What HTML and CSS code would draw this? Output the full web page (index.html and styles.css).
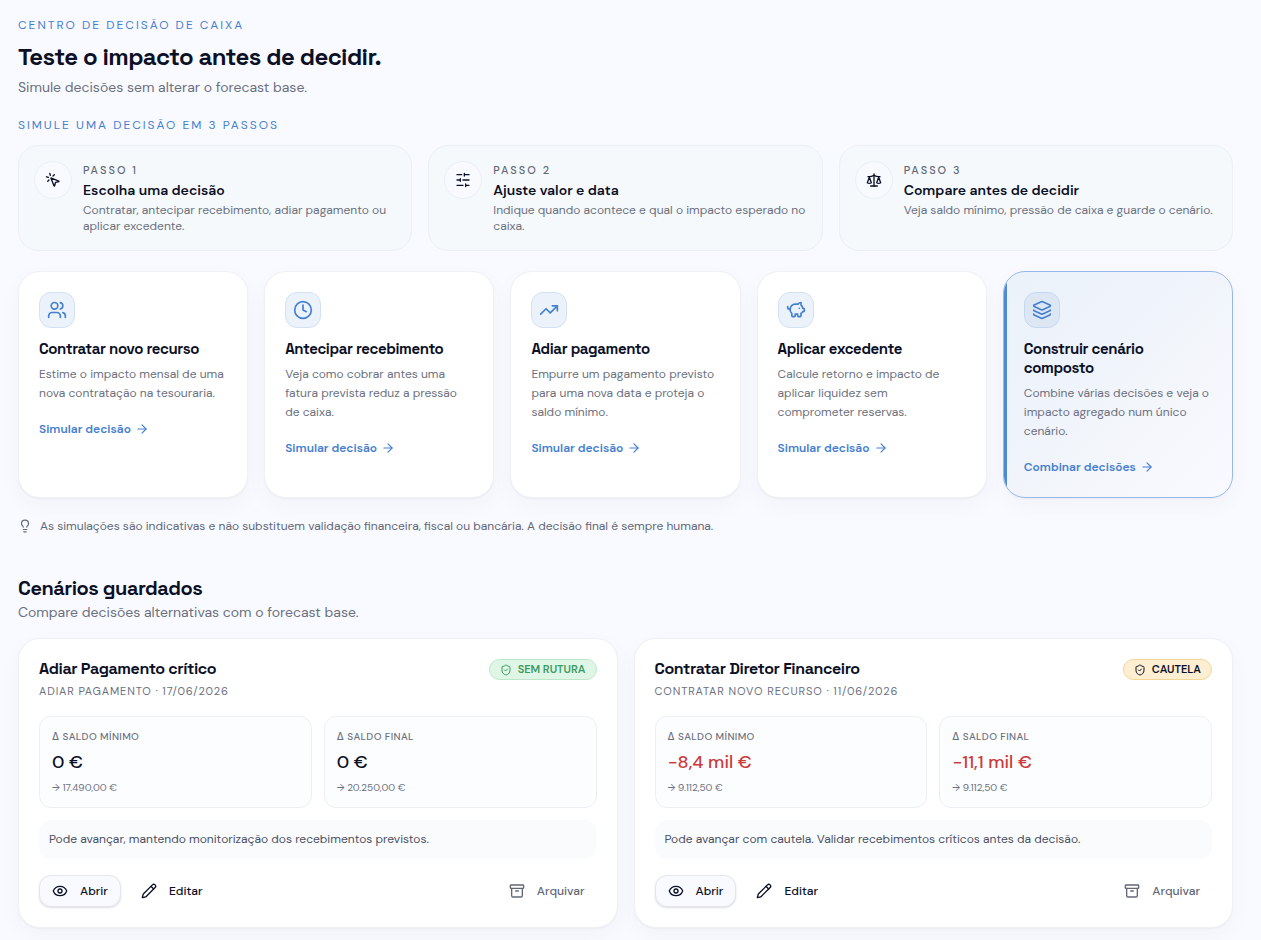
FILE: index.html
```html
<!DOCTYPE html>
<html lang="pt">
<head>
    <meta charset="UTF-8">
    <meta name="viewport" content="width=device-width, initial-scale=1.0">
    <title>Centro de decisão de caixa</title>
    <link rel="stylesheet" href="styles.css">
</head>
<body>
    <main class="page">
        <header class="page-header">
            <p class="eyebrow">Centro de decisão de caixa</p>
            <h1>Teste o impacto antes de decidir.</h1>
            <p class="lead">Simule decisões sem alterar o forecast base.</p>
        </header>

        <p class="eyebrow">Simule uma decisão em 3 passos</p>
        <ol class="steps">
            <li class="step">
                <span class="step-icon">
                    <svg class="icon" viewBox="0 0 24 24"><path d="M14 4.1 12 6"/><path d="m5.1 8-2.9-.8"/><path d="m6 12-1.9 2"/><path d="M7.2 2.2 8 5.1"/><path d="M9.037 9.69a.498.498 0 0 1 .653-.653l11 4.5a.5.5 0 0 1-.074.949l-4.349 1.041a1 1 0 0 0-.74.739l-1.04 4.35a.5.5 0 0 1-.95.074z"/></svg>
                </span>
                <div class="step-text">
                    <p class="step-number">Passo 1</p>
                    <h2>Escolha uma decisão</h2>
                    <p class="step-desc">Contratar, antecipar recebimento, adiar pagamento ou aplicar excedente.</p>
                </div>
            </li>
            <li class="step">
                <span class="step-icon">
                    <svg class="icon" viewBox="0 0 24 24"><path d="M21 4h-7M10 4H3M21 12h-9M8 12H3M21 20h-5M12 20H3M14 2v4M8 10v4M16 18v4"/></svg>
                </span>
                <div class="step-text">
                    <p class="step-number">Passo 2</p>
                    <h2>Ajuste valor e data</h2>
                    <p class="step-desc">Indique quando acontece e qual o impacto esperado no caixa.</p>
                </div>
            </li>
            <li class="step">
                <span class="step-icon">
                    <svg class="icon" viewBox="0 0 24 24"><path d="m16 16 3-8 3 8c-.87.65-1.92 1-3 1s-2.13-.35-3-1Z"/><path d="m2 16 3-8 3 8c-.87.65-1.92 1-3 1s-2.13-.35-3-1Z"/><path d="M7 21h10"/><path d="M12 3v18"/><path d="M3 7h2c2 0 5-1 7-2 2 1 5 2 7 2h2"/></svg>
                </span>
                <div class="step-text">
                    <p class="step-number">Passo 3</p>
                    <h2>Compare antes de decidir</h2>
                    <p class="step-desc">Veja saldo mínimo, pressão de caixa e guarde o cenário.</p>
                </div>
            </li>
        </ol>

        <section class="decisions">
            <article class="card decision">
                <span class="decision-icon">
                    <svg class="icon" viewBox="0 0 24 24"><path d="M16 21v-2a4 4 0 0 0-4-4H6a4 4 0 0 0-4 4v2"/><circle cx="9" cy="7" r="4"/><path d="M22 21v-2a4 4 0 0 0-3-3.87"/><path d="M16 3.13a4 4 0 0 1 0 7.75"/></svg>
                </span>
                <h3>Contratar novo recurso</h3>
                <p>Estime o impacto mensal de uma nova contratação na tesouraria.</p>
                <a href="#">Simular decisão <svg class="icon" viewBox="0 0 24 24"><path d="M5 12h14"/><path d="m12 5 7 7-7 7"/></svg></a>
            </article>
            <article class="card decision">
                <span class="decision-icon">
                    <svg class="icon" viewBox="0 0 24 24"><circle cx="12" cy="12" r="10"/><path d="M12 6v6l4 2"/></svg>
                </span>
                <h3>Antecipar recebimento</h3>
                <p>Veja como cobrar antes uma fatura prevista reduz a pressão de caixa.</p>
                <a href="#">Simular decisão <svg class="icon" viewBox="0 0 24 24"><path d="M5 12h14"/><path d="m12 5 7 7-7 7"/></svg></a>
            </article>
            <article class="card decision">
                <span class="decision-icon">
                    <svg class="icon" viewBox="0 0 24 24"><path d="m22 7-8.5 8.5-5-5L2 17"/><path d="M16 7h6v6"/></svg>
                </span>
                <h3>Adiar pagamento</h3>
                <p>Empurre um pagamento previsto para uma nova data e proteja o saldo mínimo.</p>
                <a href="#">Simular decisão <svg class="icon" viewBox="0 0 24 24"><path d="M5 12h14"/><path d="m12 5 7 7-7 7"/></svg></a>
            </article>
            <article class="card decision">
                <span class="decision-icon">
                    <svg class="icon" viewBox="0 0 24 24"><path d="M11 17h3v2a1 1 0 0 0 1 1h2a1 1 0 0 0 1-1v-3a3.16 3.16 0 0 0 2-2h1a1 1 0 0 0 1-1v-2a1 1 0 0 0-1-1h-1a5 5 0 0 0-2-4V3a4 4 0 0 0-3.2 1.6l-.3.4H11a6 6 0 0 0-6 6v1a5 5 0 0 0 2 4v3a1 1 0 0 0 1 1h2a1 1 0 0 0 1-1z"/><path d="M16 10h.01"/><path d="M2 8v1a2 2 0 0 0 2 2h1"/></svg>
                </span>
                <h3>Aplicar excedente</h3>
                <p>Calcule retorno e impacto de aplicar liquidez sem comprometer reservas.</p>
                <a href="#">Simular decisão <svg class="icon" viewBox="0 0 24 24"><path d="M5 12h14"/><path d="m12 5 7 7-7 7"/></svg></a>
            </article>
            <article class="card decision decision-featured">
                <span class="decision-icon">
                    <svg class="icon" viewBox="0 0 24 24"><path d="M12.83 2.18a2 2 0 0 0-1.66 0L2.6 6.08a1 1 0 0 0 0 1.83l8.58 3.91a2 2 0 0 0 1.66 0l8.58-3.9a1 1 0 0 0 0-1.83z"/><path d="M2 12a1 1 0 0 0 .58.91l8.6 3.91a2 2 0 0 0 1.65 0l8.58-3.9A1 1 0 0 0 22 12"/><path d="M2 17a1 1 0 0 0 .58.91l8.6 3.91a2 2 0 0 0 1.65 0l8.58-3.9A1 1 0 0 0 22 17"/></svg>
                </span>
                <h3>Construir cenário composto</h3>
                <p>Combine várias decisões e veja o impacto agregado num único cenário.</p>
                <a href="#">Combinar decisões <svg class="icon" viewBox="0 0 24 24"><path d="M5 12h14"/><path d="m12 5 7 7-7 7"/></svg></a>
            </article>
        </section>

        <p class="note">
            <svg class="icon" viewBox="0 0 24 24"><path d="M15 14c.2-1 .7-1.7 1.5-2.5 1-.9 1.5-2.2 1.5-3.5A6 6 0 0 0 6 8c0 1 .2 2.2 1.5 3.5.7.7 1.3 1.5 1.5 2.5"/><path d="M9 18h6"/><path d="M10 22h4"/></svg>
            As simulações são indicativas e não substituem validação financeira, fiscal ou bancária. A decisão final é sempre humana.
        </p>

        <section class="saved">
            <h2>Cenários guardados</h2>
            <p class="lead">Compare decisões alternativas com o forecast base.</p>

            <div class="scenarios">
                <article class="card scenario">
                    <div class="scenario-head">
                        <div>
                            <h3>Adiar Pagamento crítico</h3>
                            <p class="scenario-meta">Adiar pagamento · 17/06/2026</p>
                        </div>
                        <span class="badge badge-ok">
                            <svg class="icon" viewBox="0 0 24 24"><path d="M20 13c0 5-3.5 7.5-7.66 8.95a1 1 0 0 1-.67-.01C7.5 20.5 4 18 4 13V6a1 1 0 0 1 1-1c2 0 4.5-1.2 6.24-2.72a1.17 1.17 0 0 1 1.52 0C14.51 3.81 17 5 19 5a1 1 0 0 1 1 1z"/><path d="m9 12 2 2 4-4"/></svg>
                            Sem rutura
                        </span>
                    </div>
                    <dl class="metrics">
                        <div class="metric">
                            <dt>Δ Saldo mínimo</dt>
                            <dd class="metric-value">0 €</dd>
                            <dd class="metric-hint">→ 17.490,00 €</dd>
                        </div>
                        <div class="metric">
                            <dt>Δ Saldo final</dt>
                            <dd class="metric-value">0 €</dd>
                            <dd class="metric-hint">→ 20.250,00 €</dd>
                        </div>
                    </dl>
                    <p class="message">Pode avançar, mantendo monitorização dos recebimentos previstos.</p>
                    <div class="actions">
                        <button type="button" class="btn btn-outline"><svg class="icon" viewBox="0 0 24 24"><path d="M2.06 12.35a1 1 0 0 1 0-.7 10.75 10.75 0 0 1 19.88 0 1 1 0 0 1 0 .7 10.75 10.75 0 0 1-19.88 0"/><circle cx="12" cy="12" r="3"/></svg>Abrir</button>
                        <button type="button" class="btn"><svg class="icon" viewBox="0 0 24 24"><path d="M21.17 6.81a1 1 0 0 0-3.99-3.99L3.84 16.17a2 2 0 0 0-.5.83l-1.32 4.35a.5.5 0 0 0 .62.62l4.35-1.32a2 2 0 0 0 .83-.5z"/><path d="m15 5 4 4"/></svg>Editar</button>
                        <button type="button" class="btn btn-muted"><svg class="icon" viewBox="0 0 24 24"><rect width="20" height="5" x="2" y="3" rx="1"/><path d="M4 8v11a2 2 0 0 0 2 2h12a2 2 0 0 0 2-2V8"/><path d="M10 12h4"/></svg>Arquivar</button>
                    </div>
                </article>

                <article class="card scenario">
                    <div class="scenario-head">
                        <div>
                            <h3>Contratar Diretor Financeiro</h3>
                            <p class="scenario-meta">Contratar novo recurso · 11/06/2026</p>
                        </div>
                        <span class="badge badge-warn">
                            <svg class="icon" viewBox="0 0 24 24"><path d="M20 13c0 5-3.5 7.5-7.66 8.95a1 1 0 0 1-.67-.01C7.5 20.5 4 18 4 13V6a1 1 0 0 1 1-1c2 0 4.5-1.2 6.24-2.72a1.17 1.17 0 0 1 1.52 0C14.51 3.81 17 5 19 5a1 1 0 0 1 1 1z"/><path d="m9 12 2 2 4-4"/></svg>
                            Cautela
                        </span>
                    </div>
                    <dl class="metrics">
                        <div class="metric">
                            <dt>Δ Saldo mínimo</dt>
                            <dd class="metric-value negative">−8,4 mil €</dd>
                            <dd class="metric-hint">→ 9.112,50 €</dd>
                        </div>
                        <div class="metric">
                            <dt>Δ Saldo final</dt>
                            <dd class="metric-value negative">−11,1 mil €</dd>
                            <dd class="metric-hint">→ 9.112,50 €</dd>
                        </div>
                    </dl>
                    <p class="message">Pode avançar com cautela. Validar recebimentos críticos antes da decisão.</p>
                    <div class="actions">
                        <button type="button" class="btn btn-outline"><svg class="icon" viewBox="0 0 24 24"><path d="M2.06 12.35a1 1 0 0 1 0-.7 10.75 10.75 0 0 1 19.88 0 1 1 0 0 1 0 .7 10.75 10.75 0 0 1-19.88 0"/><circle cx="12" cy="12" r="3"/></svg>Abrir</button>
                        <button type="button" class="btn"><svg class="icon" viewBox="0 0 24 24"><path d="M21.17 6.81a1 1 0 0 0-3.99-3.99L3.84 16.17a2 2 0 0 0-.5.83l-1.32 4.35a.5.5 0 0 0 .62.62l4.35-1.32a2 2 0 0 0 .83-.5z"/><path d="m15 5 4 4"/></svg>Editar</button>
                        <button type="button" class="btn btn-muted"><svg class="icon" viewBox="0 0 24 24"><rect width="20" height="5" x="2" y="3" rx="1"/><path d="M4 8v11a2 2 0 0 0 2 2h12a2 2 0 0 0 2-2V8"/><path d="M10 12h4"/></svg>Arquivar</button>
                    </div>
                </article>
            </div>
        </section>
    </main>
</body>
</html>
```

FILE: styles.css
```css
* {
    box-sizing: border-box;
}
body {
    font-family: "DM Sans", Inter, sans-serif;
    margin: 0;
    background-color: #f9faff;
    color: #0b1026;
}
h1, h2, h3, p, ol, dl, dd {
    margin: 0;
    padding: 0;
}
h1, h2, h3 {
    font-family: "Space Grotesk", "DM Sans", Inter, sans-serif;
    font-weight: 600;
    letter-spacing: -0.025em;
}
.page {
    padding: 17px 28px 12px 18px;
}
.icon {
    width: 16px;
    height: 16px;
    flex-shrink: 0;
    fill: none;
    stroke: currentColor;
    stroke-width: 2;
    stroke-linecap: round;
    stroke-linejoin: round;
}
.eyebrow {
    font-size: 12px;
    line-height: 16px;
    letter-spacing: 2px;
    text-transform: uppercase;
    color: #4580d0;
}
.page-header {
    margin-bottom: 20px;
}
.page-header h1 {
    margin: 8px 0 4px;
    font-size: 24px;
    line-height: 32px;
}
.lead {
    font-size: 14px;
    line-height: 20px;
    color: #6b7080;
}

/* Steps */
.steps {
    display: grid;
    grid-template-columns: repeat(3, 1fr);
    gap: 16px;
    margin-top: 12px;
    list-style: none;
}
.step {
    display: flex;
    gap: 11px;
    padding: 15px;
    background: #f5f9fc;
    border: 1px solid #eceff4;
    border-radius: 20px;
}
.step-icon {
    display: flex;
    align-items: center;
    justify-content: center;
    flex-shrink: 0;
    width: 38px;
    height: 38px;
    background: #f9faff;
    border: 1px solid #eceff4;
    border-radius: 50%;
}
.step-number {
    font-size: 11px;
    font-weight: 500;
    line-height: 18px;
    letter-spacing: 2px;
    text-transform: uppercase;
    color: #626878;
}
.step h2 {
    font-family: "DM Sans", Inter, sans-serif;
    font-size: 14px;
    line-height: 22px;
    letter-spacing: normal;
}
.step-desc {
    margin: 1px 0;
    font-size: 12px;
    line-height: 16px;
    color: #6b7080;
}

/* Decision cards */
.card {
    padding: 20px;
    background: #fff;
    border: 1px solid #eff1f5;
    border-radius: 22px;
    box-shadow: 0 1px 2px rgba(15, 23, 42, 0.04), 0 8px 24px rgba(15, 23, 42, 0.03);
}
.decisions {
    display: grid;
    grid-template-columns: repeat(5, 1fr);
    gap: 16px;
    margin-top: 20px;
}
.decision {
    display: flex;
    flex-direction: column;
    align-items: flex-start;
}
.decision-icon {
    display: flex;
    align-items: center;
    justify-content: center;
    width: 36px;
    height: 36px;
    margin-bottom: 11px;
    color: #4580d0;
    background: #ebf2fa;
    border: 1px solid #d3e1f5;
    border-radius: 12px;
}
.decision-icon .icon {
    width: 20px;
    height: 20px;
}
.decision h3 {
    font-size: 15px;
    line-height: 19px;
}
.decision p {
    margin: 7px 0 16px;
    font-size: 12px;
    line-height: 19px;
    color: #6b7080;
}
.decision a {
    display: inline-flex;
    align-items: center;
    gap: 4px;
    font-size: 12px;
    font-weight: 600;
    line-height: 20px;
    color: #4580d0;
    text-decoration: none;
}
.decision a .icon {
    width: 14px;
    height: 14px;
}
.decision-featured {
    position: relative;
    overflow: hidden;
    background: linear-gradient(135deg, #ebf2f9 0%, #eef3fc 35%, #f2f5fa 55%, #f9faff 100%);
    border-color: #98b9e8;
}
.decision-featured::before {
    content: "";
    position: absolute;
    top: 0;
    bottom: 0;
    left: 0;
    width: 3px;
    background: #4f8ad4;
}
.decision-featured .decision-icon {
    background: #dde7f4;
    border-color: #c6d8f1;
}

.note {
    display: flex;
    align-items: center;
    gap: 8px;
    margin-top: 20px;
    font-size: 12px;
    line-height: 16px;
    color: #626878;
}
.note .icon {
    width: 14px;
    height: 14px;
}

/* Saved scenarios */
.saved {
    margin-top: 40px;
}
.saved h2 {
    font-size: 20px;
    line-height: 28px;
}
.scenarios {
    display: grid;
    grid-template-columns: repeat(2, 1fr);
    gap: 16px;
    margin-top: 16px;
}
.scenario-head {
    display: flex;
    justify-content: space-between;
    align-items: flex-start;
    gap: 12px;
}
.scenario h3 {
    font-size: 16px;
    line-height: 20px;
}
.scenario-meta {
    margin-top: 4px;
    font-size: 11px;
    line-height: 17px;
    letter-spacing: 0.08em;
    text-transform: uppercase;
    color: #6b7080;
}
.badge {
    display: inline-flex;
    align-items: center;
    gap: 6px;
    padding: 0 10px;
    font-size: 11px;
    font-weight: 600;
    line-height: 19px;
    text-transform: uppercase;
    white-space: nowrap;
    border: 1px solid;
    border-radius: 11px;
}
.badge .icon {
    width: 12px;
    height: 12px;
}
.badge-ok {
    color: #3a9a62;
    background: #dff6e6;
    border-color: #bbe6c9;
}
.badge-warn {
    color: #0b1026;
    background: #feefd3;
    border-color: #f3d594;
}
.metrics {
    display: grid;
    grid-template-columns: repeat(2, 1fr);
    gap: 12px;
    margin: 16px 0 12px;
}
.metric {
    padding: 12px;
    background: #fcfdff;
    border: 1px solid #eceff4;
    border-radius: 12px;
}
.metric dt {
    font-size: 10px;
    font-weight: 500;
    line-height: 15px;
    letter-spacing: 0.04em;
    text-transform: uppercase;
    color: #6b7080;
}
.metric-value {
    margin: 6px 0;
    font-size: 18px;
    font-weight: 500;
    line-height: 24px;
}
.metric-hint {
    font-size: 10px;
    line-height: 15px;
    color: #6b7080;
}
.negative {
    color: #cc3a3a;
}
.message {
    padding: 10px;
    font-size: 12px;
    line-height: 19px;
    color: #4a5064;
    background: #fafbfd;
    border-radius: 12px;
}
.actions {
    display: flex;
    gap: 8px;
    margin-top: 16px;
}
.btn {
    display: inline-flex;
    align-items: center;
    gap: 12px;
    height: 32px;
    padding: 0 12px;
    font-family: inherit;
    font-size: 12px;
    font-weight: 500;
    color: #0b1026;
    background: none;
    border: 0;
    border-radius: 12px;
    cursor: pointer;
}
.btn-outline {
    background: #f9faff;
    border: 1px solid #e3e6ec;
    box-shadow: 0 1px 2px rgba(15, 23, 42, 0.14);
}
.btn-muted {
    margin-left: auto;
    color: #626878;
}
```
